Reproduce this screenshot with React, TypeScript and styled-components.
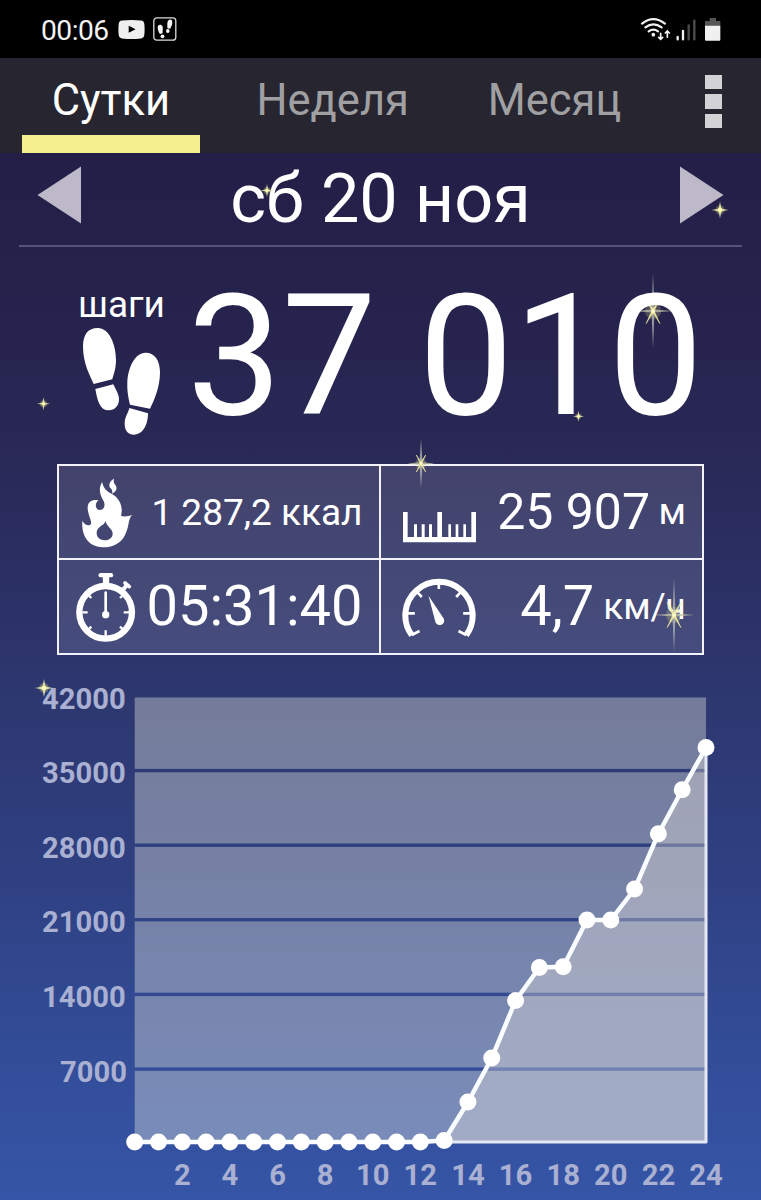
import React from "react";
import styled, { createGlobalStyle } from "styled-components";

const GlobalStyle = createGlobalStyle`
  body { margin: 0; background: #000; }
  * { box-sizing: border-box; }
`;

const Screen = styled.main`
  position: relative;
  width: 761px;
  height: 1200px;
  overflow: hidden;
  display: flex;
  flex-direction: column;
  color: #fff;
  font-family: Roboto, "Liberation Sans", sans-serif;
  background: linear-gradient(
    #231f47 0, #231f47 150px, #25224c 290px, #292855 440px, #2b2f63 570px,
    #2d376f 690px, #2f4082 880px, #31488f 980px, #3451a0 1130px, #3655a6 1200px
  );
`;

const StatusBar = styled.header`
  height: 58px;
  flex: none;
  display: flex;
  justify-content: space-between;
  align-items: flex-start;
  padding: 0 39px 0 41px;
  background: #000;
`;

const StatusGroup = styled.div`
  display: flex;
  align-items: flex-start;
`;

const Clock = styled.span`
  margin-top: 17px;
  width: 77px;
  font-size: 28.2px;
  line-height: 1;
  letter-spacing: -0.5px;
  color: #f2f2f2;
`;

const Glyph = styled.svg<{ $mt?: number; $ml?: number }>`
  display: block;
  flex: none;
  margin-top: ${(p) => p.$mt ?? 0}px;
  margin-left: ${(p) => p.$ml ?? 0}px;
`;

const TabBar = styled.nav`
  height: 95px;
  flex: none;
  display: flex;
  background: #272630;
`;

const Tab = styled.div<{ $active?: boolean }>`
  width: 221.8px;
  padding: 0 22px;
  display: flex;
  flex-direction: column;
  justify-content: space-between;
  text-align: center;
  color: ${(p) => (p.$active ? "#fff" : "#a0a0a3")};
  &::after {
    content: "";
    height: 18px;
    background: ${(p) => (p.$active ? "#f5f08e" : "transparent")};
  }
`;

const TabLabel = styled.span`
  margin: 20.5px -20px 0;
  font-size: 43.5px;
  line-height: 1;
  white-space: nowrap;
`;

const MenuButton = styled.div`
  flex: 1;
  display: flex;
  flex-direction: column;
  align-items: center;
  gap: 5px;
  padding-top: 16.5px;
`;

const MenuDot = styled.i`
  width: 17px;
  height: 14.5px;
  background: #d3d3d5;
`;

const DateRow = styled.section`
  position: relative;
  height: 94px;
  flex: none;
  margin: 0 19px;
  padding: 0 18px;
  display: flex;
  justify-content: space-between;
  border-bottom: 2px solid #57537c;
`;

const DateText = styled.h1`
  margin: 12px 0 0;
  font-size: 68.4px;
  font-weight: 400;
  line-height: 1;
  white-space: nowrap;
`;

const Hero = styled.section`
  position: relative;
  height: 217px;
  flex: none;
  display: flex;
`;

const StepsLabel = styled.div`
  width: 109px;
  margin-left: 78px;
  padding-top: 39px;
  font-size: 37px;
  line-height: 1;
  white-space: nowrap;
`;

const StepsValue = styled.div`
  margin-top: 24.5px;
  font-size: 168.8px;
  line-height: 1;
  white-space: nowrap;
`;

const Stats = styled.section`
  width: 647px;
  height: 191px;
  flex: none;
  margin-left: 57px;
  display: grid;
  grid-template: 94px 93px / 321.500px 321.500px;
  border: 2px solid #f2f2f8;
  background: rgba(255, 255, 255, 0.12);
`;

const Cell = styled.div<{ $right?: boolean; $bottom?: boolean }>`
  display: flex;
  align-items: flex-start;
  justify-content: space-between;
  padding-right: 16px;
  border-right: ${(p) => (p.$right ? "0" : "2px solid #f2f2f8")};
  border-bottom: ${(p) => (p.$bottom ? "0" : "2px solid #f2f2f8")};
`;

const Reading = styled.div`
  display: flex;
  align-items: flex-start;
  white-space: nowrap;
`;

const Value = styled.span<{ $size: number; $top: number; $gap?: number }>`
  margin-top: ${(p) => p.$top}px;
  margin-left: ${(p) => p.$gap ?? 0}px;
  font-size: ${(p) => p.$size}px;
  line-height: 1;
`;

const ChartArea = styled.section`
  height: 545px;
  flex: none;
`;

const Sky = styled.svg`
  position: absolute;
  inset: 0;
  pointer-events: none;
`;

const Label = styled.text`
  font: 700 29.2px Roboto, "Liberation Sans", sans-serif;
  fill: #a9b0d2;
`;

function Spark({ x, y, r = 8 }: { x: number; y: number; r?: number }) {
  const k = r * 0.16;
  return (
    <g transform={`translate(${x} ${y})`}>
      <circle r={r * 0.55} fill="#e9e68a" opacity="0.3" />
      <path
        d={`M0 ${-r}L${k} ${-k}L${r} 0L${k} ${k}L0 ${r}L${-k} ${k}L${-r} 0L${-k} ${-k}Z`}
        fill="#d8dba6"
      />
      <circle r={r * 0.28} fill="#fbf8b0" />
    </g>
  );
}

function BigStar({ x, y, r }: { x: number; y: number; r: number }) {
  const a = r * 0.34;
  const w = r * 0.03;
  return (
    <g transform={`translate(${x} ${y})`}>
      <circle r={r * 0.22} fill="#f3ec90" opacity="0.22" />
      <path d={`M0 ${-r}L1.5 0L0 ${r}L-1.5 0Z`} fill="#b9bcb8" opacity="0.75" />
      <path d={`M${-r * 0.55} 0L0 -1.6L${r * 0.55} 0L0 1.6Z`} fill="#c5c6a8" opacity="0.75" />
      <path
        d={`M${-a * 0.55} ${-a}L${w} 0L${a * 0.55} ${a}L${-w} 0ZM${a * 0.55} ${-a}L${w} 0L${-a * 0.55} ${a}L${-w} 0Z`}
        fill="#eee99c"
        stroke="#eee99c"
        strokeWidth="0.6"
      />
      <circle r={r * 0.05} fill="#fffcd0" />
    </g>
  );
}

const LeftSole =
  "M233 172C268 172 288 222 288 268C288 296 280 312 277 326L221 340C212 318 189 280 189 228C189 190 205 172 233 172ZM226 355L280 341C286 355 297 370 297 386C297 405 285 419 266 419C240 419 232 390 226 355Z";
const RightSole =
  "M377 246C405 246 420 270 420 305C420 350 402 390 390 414L330 402C326 385 321 365 322 335C324 290 345 246 377 246ZM328 412L384 428C384 460 370 492 342 492C322 492 313 476 314 456C315 438 324 428 328 412Z";

const Footprints = () => (
  <Glyph $ml={4} $mt={3.500} width="79" height="109" viewBox="186 169 237 327" fill="#fff">
    <path d={LeftSole} />
    <path d={RightSole} />
  </Glyph>
);

const VideoIcon = () => (
  <Glyph $mt={20} width="27" height="19" viewBox="0 0 27 19">
    <path
      d="M4 .6Q13.500-.4 23 .6Q26 1 26.300 4Q26.900 9.500 26.300 15Q26 18 23 18.400Q13.500 19.400 4 18.400Q1 18 .7 15Q.1 9.500 .7 4Q1 1 4 .6Z"
      fill="#efefef"
    />
    <path d="M10.700 5.800L17.600 9.300L10.700 12.800Z" fill="#000" />
  </Glyph>
);

const PedometerIcon = () => (
  <Glyph $ml={7.7} $mt={17.3} width="24" height="24" viewBox="0 0 24 24" fill="#f5f5f5">
    <rect x=".8" y=".8" width="22" height="22.400" rx="3" fill="none" stroke="#dcdcdc" strokeWidth="1.300" />
    <path d="M7 7.800C9.400 7.800 10.200 10.500 9.700 12.600C9.500 14 9.800 15 9.600 16.200L6.900 17C6 15.300 4.700 13 4.700 10.900C4.700 9 5.500 7.800 7 7.800Z" />
    <ellipse cx="9.500" cy="19.300" rx="1.900" ry="1.900" />
    <path d="M17.300 2.600C19 2.700 19.500 4.500 19.200 6.500C19 8.600 17.900 10.200 17.200 11.800L14.500 11.200C14.200 9.800 14.400 8.800 14.300 7.500C14.200 5 15.200 2.500 17.300 2.600Z" />
    <ellipse cx="14.800" cy="14" rx="1.800" ry="1.900" />
  </Glyph>
);

const SignalIcons = () => (
  <Glyph $mt={17} width="82" height="26" viewBox="780 51 246 78" fill="none">
    <g stroke="#f2f2f2" strokeWidth="6.500" strokeLinecap="round">
      <path d="M786 71Q820 44 855 71M796 82Q820 64 845 82M806 94Q820 84 834 94" />
      <g strokeWidth="5">
        <path d="M842 100V117M836 112L842 118L848 112M862 112V94M856 99L862 93L868 99" />
      </g>
    </g>
    <circle cx="820" cy="104" r="5.500" fill="#f2f2f2" />
    <g strokeWidth="7" strokeLinecap="round">
      <path d="M893 111V118M909 93V118" stroke="#f2f2f2" />
      <path d="M926 76V118M943 62V118" stroke="#4d4d4d" />
    </g>
    <path d="M989 54H1008V63H1021V78H975V63H989Z" fill="#555" />
    <path d="M975 77H1021V119Q1021 122 1018 122H978Q975 122 975 119Z" fill="#f0f0f0" />
  </Glyph>
);

const FlameIcon = () => (
  <Glyph $ml={22} $mt={11.700} width="51.700" height="70" viewBox="95 68 155 210" fill="#fff">
    <path
      fillRule="evenodd"
      d="M158 80C163 100 172 108 188 116C212 130 222 155 215 181C226 186 238 182 249 178C236 190 240 210 230 232C220 260 195 276 160 276C122 276 95 246 99 196C106 210 121 214 125 205C128 196 114 176 115 155C116 139 130 131 147 135C135 145 138 164 151 164C164 164 169 150 163 138C156 124 144 106 158 80ZM168 197C166 207 158 209 152 214C144 220 142 226 142 234C142 246 152 255 166 255C179 255 190 247 190 235C190 221 174 216 168 197Z"
    />
    <path d="M194 70C179 78 177 92 184 99C189 104 190 108 188 115C200 109 206 99 198 89C193 83 192 77 194 70Z" />
  </Glyph>
);

const StopwatchIcon = () => (
  <Glyph $ml={16.300} $mt={11.700} width="62" height="71" viewBox="76 350 186 213" fill="none" stroke="#fff">
    <circle cx="168" cy="471" r="79" strokeWidth="19" />
    <path d="M153 359.500H184" strokeWidth="13" strokeLinecap="round" />
    <path d="M169 362V390" strokeWidth="19" />
    <path d="M218 405L233 388" strokeWidth="12" />
    <path d="M226 383L239 394" strokeWidth="11" strokeLinecap="round" />
    <path
      d="M168 545V525M98 471H114M238 471H222M113 416L125 428M223 416L211 428M113 526L125 514M223 526L211 514"
      strokeWidth="7"
    />
    <path d="M168 412V475" strokeWidth="8" strokeLinecap="round" />
    <circle cx="168" cy="478" r="11" fill="#fff" stroke="none" />
  </Glyph>
);

const RulerIcon = () => (
  <Glyph $ml={22.500} $mt={45.700} width="73" height="31" viewBox="99 170 219 93" fill="#fff">
    <path d="M99 170H113V245H132V207H141V245H155V207H164V245H177V207H186V245H202V170H216V245H235V207H243V245H257V207H265V245H280V207H288V245H304V170H318V261H99Z" />
  </Glyph>
);

const GaugeIcon = () => (
  <Glyph $ml={21.800} $mt={15.500} width="74" height="62" viewBox="97.500 361 222 186" fill="none" stroke="#fff">
    <path d="M127 539A101 101 0 1 1 290 539" strokeWidth="18" />
    <path
      d="M208 375V400M113 473H136M304 473H281M141 407L157 424M276 407L260 424M127 538L150 526M290 538L267 526"
      strokeWidth="8"
    />
    <path d="M177 420L223 489A13.500 13.500 0 0 1 198 500Z" fill="#fff" stroke="none" />
  </Glyph>
);

const PLOT = { left: 134.7, right: 706, top: 697.5, base: 1142 };
const STEPS_BY_HOUR = [
  0, 0, 0, 0, 0, 0, 0, 0, 0, 0, 0, 0, 0, 140, 3753, 7880, 13275, 16370, 16446,
  20827, 20827, 23736, 28925, 33043, 37010,
];
const GRID = [
  { label: "35000", y: 770.6 },
  { label: "28000", y: 845.2 },
  { label: "21000", y: 919.7 },
  { label: "14000", y: 994.4 },
  { label: "7000", y: 1069.1 },
];

function StepsChart() {
  const step = (PLOT.right - PLOT.left) / 24;
  const points = STEPS_BY_HOUR.map((v, i) => [
    PLOT.left + i * step,
    PLOT.base - v * 0.010659,
  ]);
  const line = points.map(([x, y]) => `${x.toFixed(1)},${y.toFixed(1)}`).join(" ");
  const edges = [PLOT.top, ...GRID.map((g) => g.y), PLOT.base + 1.7];
  return (
    <Glyph width="761" height="545" viewBox="0 655 761 545">
      {edges.slice(0, -1).map((top, i) => {
        const y = i === 0 ? top : top + 1.7;
        return (
          <rect
            key={top}
            x={PLOT.left}
            y={y}
            width={PLOT.right - PLOT.left}
            height={edges[i + 1] - 1.7 - y}
            fill="rgba(226,228,220,.4)"
          />
        );
      })}
      <polygon
        points={`${line} ${PLOT.right},${PLOT.base} ${PLOT.left},${PLOT.base}`}
        fill="rgba(250,240,228,.32)"
      />
      <path
        d={`M${PLOT.right} 747V${PLOT.base}H440`}
        fill="none"
        stroke="#e6e9f5"
        strokeWidth="3"
        strokeLinejoin="round"
      />
      <polyline points={line} fill="none" stroke="#fafdff" strokeWidth="4.500" strokeLinejoin="round" />
      {points.map(([x, y], i) => (
        <circle key={i} cx={x} cy={y} r="8.500" fill="#fff" />
      ))}
      <Label x="125.700" y="708.700" textAnchor="end">42000</Label>
      {GRID.map((g) => (
        <Label key={g.label} x={g.label === "7000" ? 127 : 125.7} y={g.y + 12.4} textAnchor="end">
          {g.label}
        </Label>
      ))}
      {Array.from({ length: 12 }, (_, i) => (i + 1) * 2).map((h) => (
        <Label key={h} x={PLOT.left + h * step} y="1185.300" textAnchor="middle">
          {h}
        </Label>
      ))}
    </Glyph>
  );
}

export default function App() {
  return (
    <Screen>
      <GlobalStyle />
      <Sky width="761" height="1200">
        <BigStar x={653} y={311} r={37} />
      </Sky>
      <StatusBar>
        <StatusGroup>
          <Clock>00:06</Clock>
          <VideoIcon />
          <PedometerIcon />
        </StatusGroup>
        <SignalIcons />
      </StatusBar>
      <TabBar>
        <Tab $active><TabLabel>Сутки</TabLabel></Tab>
        <Tab><TabLabel>Неделя</TabLabel></Tab>
        <Tab><TabLabel>Месяц</TabLabel></Tab>
        <MenuButton>
          <MenuDot />
          <MenuDot />
          <MenuDot />
        </MenuButton>
      </TabBar>
      <DateRow>
        <Glyph $mt={13} width="44" height="58" viewBox="0 0 44 58">
          <path d="M.5 29L44 .5V57.500Z" fill="#bdb9c9" />
        </Glyph>
        <DateText>сб 20 ноя</DateText>
        <Glyph $mt={13} width="44" height="58" viewBox="0 0 44 58">
          <path d="M43.500 29L0 .5V57.500Z" fill="#bdb9c9" />
        </Glyph>
      </DateRow>
      <Hero>
        <StepsLabel>
          шаги
          <Footprints />
        </StepsLabel>
        <StepsValue>37 010</StepsValue>
      </Hero>
      <Stats>
        <Cell>
          <FlameIcon />
          <Reading><Value $size={37} $top={28.4}>1 287,2 ккал</Value></Reading>
        </Cell>
        <Cell $right>
          <RulerIcon />
          <Reading>
            <Value $size={50} $top={21}>25 907</Value>
            <Value $size={37} $top={27} $gap={8.5}>м</Value>
          </Reading>
        </Cell>
        <Cell $bottom>
          <StopwatchIcon />
          <Reading><Value $size={56} $top={18.4}>05:31:40</Value></Reading>
        </Cell>
        <Cell $right $bottom>
          <GaugeIcon />
          <Reading>
            <Value $size={56} $top={18.4}>4,7</Value>
            <Value $size={37} $top={28.2} $gap={9}>км/ч</Value>
          </Reading>
        </Cell>
      </Stats>
      <ChartArea>
        <StepsChart />
      </ChartArea>
      <Sky width="761" height="1200">
        <Spark x={267} y={190.5} r={6.5} />
        <Spark x={720} y={210} r={8.5} />
        <Spark x={43.5} y={403.7} r={6.5} />
        <Spark x={578.5} y={416.3} r={5.5} />
        <Spark x={44} y={688} r={9} />
        <BigStar x={421} y={463.5} r={25} />
        <BigStar x={674} y={615} r={37} />
      </Sky>
    </Screen>
  );
}
